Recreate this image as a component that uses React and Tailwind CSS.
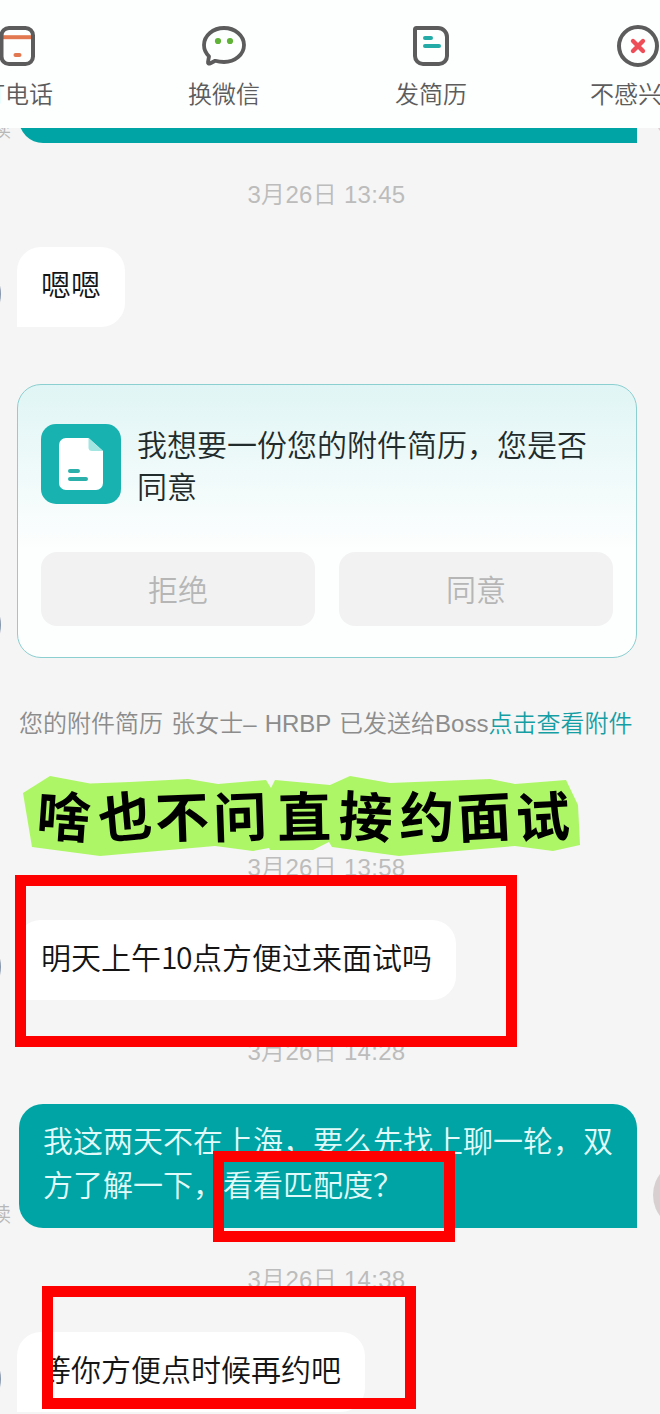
import clsx from 'clsx';

const PhoneIcon = () => (
    <svg className="size-12" viewBox="0 0 48 48" fill="none">
        <path d="M8 15.200h32" stroke="#e2784f" strokeWidth="4" />
        <rect x="8.500" y="6" width="31.500" height="36" rx="7.500" stroke="#5c5c5c" strokeWidth="4" />
        <path d="M22.500 33h4" stroke="#e2784f" strokeWidth="4" strokeLinecap="round" />
    </svg>
);

const WechatIcon = () => (
    <svg className="size-12" viewBox="0 0 48 48" fill="none">
        <path
            d="M24 6C13 6 4 13.600 4 23c0 4.600 2 8.400 5 11.300L8 40c-.2 1.300.8 2 2 1.500l5.200-2.700c2.700.8 5.700 1.200 8.800 1.200 11 0 20-7.600 20-17S35 6 24 6Z"
            stroke="#5c5c5c"
            strokeWidth="3.800"
            strokeLinejoin="round"
        />
        <circle cx="18" cy="19" r="3.100" fill="#5fb336" />
        <circle cx="30" cy="19" r="3.100" fill="#5fb336" />
    </svg>
);

const ResumeIcon = () => (
    <svg className="size-12" viewBox="0 0 48 48" fill="none">
        <path d="M9.500 6H31a9 9 0 0 1 9 9v19a8 8 0 0 1-8 8H16a8 8 0 0 1-8-8V7.500A1.500 1.500 0 0 1 9.500 6Z" stroke="#5c5c5c" strokeWidth="4" />
        <path d="M18 16h6M18 24h14" stroke="#22aba7" strokeWidth="4" strokeLinecap="round" />
    </svg>
);

const DislikeIcon = () => (
    <svg className="size-12" viewBox="0 0 48 48" fill="none">
        <circle cx="24" cy="24" r="19" stroke="#5c5c5c" strokeWidth="4" />
        <path d="m19 19 10 10M29 19 19 29" stroke="#ee4e58" strokeWidth="4.400" strokeLinecap="round" />
    </svg>
);

const DocumentIcon = () => (
    <svg className="size-20 shrink-0" viewBox="0 0 80 80" fill="none">
        <rect width="80" height="80" rx="15" fill="#18b3b0" />
        <path d="M25 14h22.500L62 27v32a7 7 0 0 1-7 7H25a7 7 0 0 1-7-7V21a7 7 0 0 1 7-7Z" fill="#fff" />
        <path d="M47.500 14 62 27H51a3.500 3.500 0 0 1-3.500-3.500V14Z" fill="#a3e6e1" />
        <path d="M29 47h8M29 55h16" stroke="#2bb0ac" strokeWidth="4" strokeLinecap="round" />
    </svg>
);

const actions = [
    { label: '打电话', Icon: PhoneIcon },
    { label: '换微信', Icon: WechatIcon },
    { label: '发简历', Icon: ResumeIcon },
    { label: '不感兴趣', Icon: DislikeIcon },
];

const Header = () => (
    <header className="h-32 overflow-hidden bg-[#fdfefe]">
        <nav className="-ml-[87px] grid w-[828px] grid-cols-4 pt-[22px]">
            {actions.map(({ label, Icon }) => (
                <div key={label} className="flex flex-col items-center gap-[7px] text-2xl leading-8 text-[#5c5c5c]">
                    <Icon />
                    <span className="pl-px">{label}</span>
                </div>
            ))}
        </nav>
    </header>
);

const TimeStamp = ({ children, className }) => (
    <div className={clsx("h-8 pr-[7px] text-center font-['Liberation_Sans','Noto_Sans_CJK_SC',sans-serif] text-2xl leading-8 tracking-[0.300px] text-[#bcbcbc]", className)}>
        {children}
    </div>
);

const BossRow = ({ children, className }) => (
    <div className={clsx('-ml-[69px] flex items-end gap-4', className)}>
        <div className="mr-[0.400px] -mb-[2px] -ml-[0.400px] size-[70px] shrink-0 rounded-full bg-linear-to-b from-[#6f7787] to-[#9fb8d2]" />
        {children}
    </div>
);

const BossBubble = ({ children }) => (
    <div className="h-20 rounded-3xl rounded-bl-none bg-white px-6 pt-[14px] text-3xl leading-[44px] text-[#141414]">{children}</div>
);

const MyRow = ({ children, className }) => (
    <div className={clsx('-mr-[63px] -ml-[29px] flex items-end', className)}>
        <span className="w-12 shrink-0 text-xl leading-7 text-[#b8b8b8]">已读</span>
        <div className="h-[124px] w-[618px] shrink-0 rounded-3xl rounded-br-none bg-[#00a4a4] px-6 pt-[13px] text-3xl leading-[44px] text-[#e2fbfa]">
            {children}
        </div>
        <div className="-mb-[2px] ml-4 size-[70px] shrink-0 rounded-full bg-[#d8cfd0]" />
    </div>
);

const ResumeCard = () => (
    <div className="h-[274px] w-[620px] rounded-3xl border border-[#8ccfd0] bg-linear-to-b from-[#e0f5f5] to-[#fdfefe] to-60% px-[23px] pt-[39px]">
        <div className="flex h-20 gap-4">
            <DocumentIcon />
            <p className="-mt-[2px] w-[460px] text-3xl leading-[42px] text-[#222b2b]">我想要一份您的附件简历，您是否同意</p>
        </div>
        <div className="mt-12 grid grid-cols-2 gap-6 text-3xl text-[#b6b6b6]">
            <button className="h-[74px] rounded-2xl bg-[#f2f2f2] pb-[3px]">拒绝</button>
            <button className="h-[74px] rounded-2xl bg-[#f2f2f2] pb-[3px]">同意</button>
        </div>
    </div>
);

const stickerChars = [
    { char: '啥', style: 'w-[62px] rotate-4' },
    { char: '也', style: 'w-[60px] -rotate-5' },
    { char: '不', style: 'w-[52px] -rotate-2' },
    { char: '问', style: 'w-[66px] -rotate-2' },
    { char: '直', style: 'w-[62px] -rotate-1' },
    { char: '接', style: 'w-[62px] rotate-3' },
    { char: '约', style: 'w-[60px] rotate-2' },
    { char: '面', style: 'w-[54px] -rotate-3' },
    { char: '试', style: 'w-[63px] -rotate-3' },
];

const Sticker = () => (
    <div className="absolute top-[776px] left-[23px] h-20 w-[558px]">
        <svg className="absolute inset-0 h-20 w-[558px]" viewBox="0 0 558 80">
            <path
                d="M0 17 27 0 67 7.500 107 6 165 3 195 8 243 4 248 12 252 4 307 9 327 0 367 7 467 3 492 8 543 4 555 29 557 69 530 75 492 70 376 80 309 71 306 66 290 74 247 74 246 72 230 75 192 70 77 80 9 71Z"
                fill="#adf666"
            />
        </svg>
        <div className="relative flex pt-[3px] pl-[10px] text-[54px] leading-[70px] font-bold text-black">
            {stickerChars.map(({ char, style }) => (
                <span key={char} className={clsx('shrink-0 text-center', style)}>{char}</span>
            ))}
        </div>
    </div>
);

const App = () => (
    <div className="relative h-[1414px] w-[660px] overflow-hidden bg-[#f5f5f5] font-['Noto_Sans_CJK_SC',sans-serif] font-[350]">
        <Header />
        <main className="h-[1286px] overflow-hidden">
            <MyRow className="-mt-[109px]" />
            <TimeStamp className="mt-9">3月26日 13:45</TimeStamp>
            <BossRow className="mt-9">
                <BossBubble>嗯嗯</BossBubble>
            </BossRow>
            <BossRow className="mt-[57px]">
                <ResumeCard />
            </BossRow>
            <p className="mt-[50px] h-8 pl-[19px] font-['Liberation_Sans','Noto_Sans_CJK_SC',sans-serif] text-2xl leading-8 [word-spacing:1.500px] whitespace-nowrap text-[#8c8c8c]">
                您的附件简历 张女士– HRBP 已发送给Boss<span className="text-[#159fa5]">点击查看附件</span>
            </p>
            <TimeStamp className="mt-28">3月26日 13:58</TimeStamp>
            <BossRow className="mt-9">
                <BossBubble>
                    明天上午<span className="mr-px tracking-[-1.500px]">10</span>点方便过来面试吗
                </BossBubble>
            </BossRow>
            <TimeStamp className="mt-9">3月26日 14:28</TimeStamp>
            <MyRow className="mt-9">我这两天不在上海，要么先找上聊一轮，双方了解一下，看看匹配度？</MyRow>
            <TimeStamp className="mt-9">3月26日 14:38</TimeStamp>
            <BossRow className="mt-9">
                <BossBubble>等你方便点时候再约吧</BossBubble>
            </BossRow>
        </main>

        {/* markup drawn on top of the chat */}
        <Sticker />
        <div className="absolute top-[875px] left-[15px] h-[172px] w-[502px] border-[11px] border-[#fe0000]" />
        <div className="absolute top-[1151px] left-[213px] h-[91px] w-[242px] border-[11px] border-[#fe0000]" />
        <div className="absolute top-[1286px] left-[42px] h-[123px] w-[374px] border-[11px] border-[#fe0000]" />
    </div>
);

export default App;
